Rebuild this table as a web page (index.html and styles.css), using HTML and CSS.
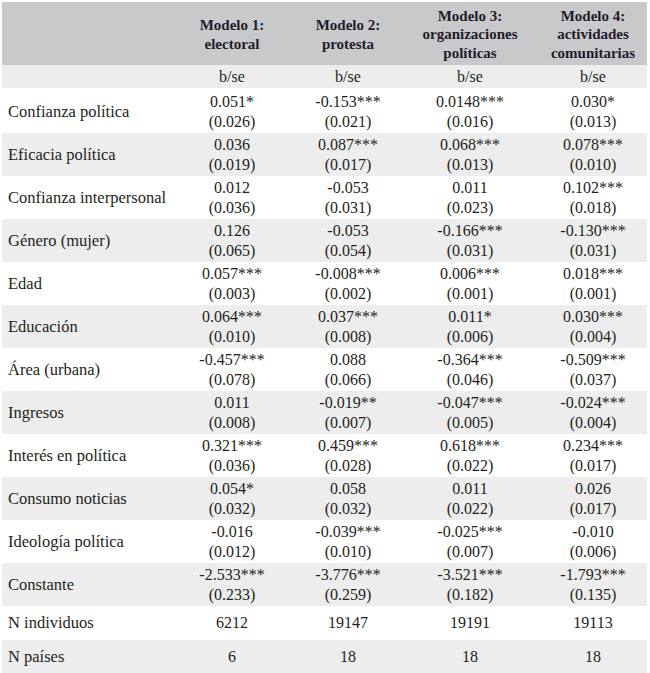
FILE: index.html
```html
<!DOCTYPE html>
<html lang="es">
<head>
<meta charset="utf-8">
<title>Modelos</title>
<link rel="stylesheet" href="styles.css">
</head>
<body>
<table class="results">
  <colgroup>
    <col class="c-label">
    <col class="c-m1">
    <col class="c-m2">
    <col class="c-m3">
    <col class="c-m4">
  </colgroup>
  <thead>
    <tr class="head">
      <th></th>
      <th>Modelo 1:<br>electoral</th>
      <th>Modelo 2:<br>protesta</th>
      <th>Modelo 3:<br>organizaciones<br>políticas</th>
      <th>Modelo 4:<br>actividades<br>comunitarias</th>
    </tr>
    <tr class="sub">
      <td></td><td>b/se</td><td>b/se</td><td>b/se</td><td>b/se</td>
    </tr>
  </thead>
  <tbody>
    <tr class="row first">
      <td class="label">Confianza política</td>
      <td>0.051*<br>(0.026)</td><td>-0.153***<br>(0.021)</td><td>0.0148***<br>(0.016)</td><td>0.030*<br>(0.013)</td>
    </tr>
    <tr class="row alt">
      <td class="label">Eficacia política</td>
      <td>0.036<br>(0.019)</td><td>0.087***<br>(0.017)</td><td>0.068***<br>(0.013)</td><td>0.078***<br>(0.010)</td>
    </tr>
    <tr class="row">
      <td class="label">Confianza interpersonal</td>
      <td>0.012<br>(0.036)</td><td>-0.053<br>(0.031)</td><td>0.011<br>(0.023)</td><td>0.102***<br>(0.018)</td>
    </tr>
    <tr class="row alt">
      <td class="label">Género (mujer)</td>
      <td>0.126<br>(0.065)</td><td>-0.053<br>(0.054)</td><td>-0.166***<br>(0.031)</td><td>-0.130***<br>(0.031)</td>
    </tr>
    <tr class="row">
      <td class="label">Edad</td>
      <td>0.057***<br>(0.003)</td><td>-0.008***<br>(0.002)</td><td>0.006***<br>(0.001)</td><td>0.018***<br>(0.001)</td>
    </tr>
    <tr class="row alt">
      <td class="label">Educación</td>
      <td>0.064***<br>(0.010)</td><td>0.037***<br>(0.008)</td><td>0.011*<br>(0.006)</td><td>0.030***<br>(0.004)</td>
    </tr>
    <tr class="row">
      <td class="label">Área (urbana)</td>
      <td>-0.457***<br>(0.078)</td><td>0.088<br>(0.066)</td><td>-0.364***<br>(0.046)</td><td>-0.509***<br>(0.037)</td>
    </tr>
    <tr class="row alt">
      <td class="label">Ingresos</td>
      <td>0.011<br>(0.008)</td><td>-0.019**<br>(0.007)</td><td>-0.047***<br>(0.005)</td><td>-0.024***<br>(0.004)</td>
    </tr>
    <tr class="row">
      <td class="label">Interés en política</td>
      <td>0.321***<br>(0.036)</td><td>0.459***<br>(0.028)</td><td>0.618***<br>(0.022)</td><td>0.234***<br>(0.017)</td>
    </tr>
    <tr class="row alt">
      <td class="label">Consumo noticias</td>
      <td>0.054*<br>(0.032)</td><td>0.058<br>(0.032)</td><td>0.011<br>(0.022)</td><td>0.026<br>(0.017)</td>
    </tr>
    <tr class="row">
      <td class="label">Ideología política</td>
      <td>-0.016<br>(0.012)</td><td>-0.039***<br>(0.010)</td><td>-0.025***<br>(0.007)</td><td>-0.010<br>(0.006)</td>
    </tr>
    <tr class="row alt">
      <td class="label">Constante</td>
      <td>-2.533***<br>(0.233)</td><td>-3.776***<br>(0.259)</td><td>-3.521***<br>(0.182)</td><td>-1.793***<br>(0.135)</td>
    </tr>
    <tr class="single">
      <td class="label">N individuos</td>
      <td>6212</td><td>19147</td><td>19191</td><td>19113</td>
    </tr>
    <tr class="single alt">
      <td class="label">N países</td>
      <td>6</td><td>18</td><td>18</td><td>18</td>
    </tr>
  </tbody>
</table>
</body>
</html>
```

FILE: styles.css
```css
html, body {
  background: #ffffff;
}
body {
  margin: 2px 0 0 2px;
  font-family: "Liberation Serif", Tinos, "DejaVu Serif", serif;
  color: #231f20;
}
.results {
  border-collapse: collapse;
  border-spacing: 0;
  table-layout: fixed;
  width: 645px;
}
.c-label { width: 167px; }
.c-m1 { width: 126px; }
.c-m2 { width: 106px; }
.c-m3 { width: 138px; }
.c-m4 { width: 108px; }

.results td,
.results th {
  padding: 0;
  text-align: center;
  vertical-align: middle;
}
.head {
  height: 63px;
  background: #c8c9cb;
}
.head th {
  font-size: 15px;
  font-weight: bold;
  line-height: 18.5px;
  padding-top: 2px;
  color: #1e1d2a;
}
.sub {
  height: 23px;
  background: #ededed;
}
.sub td {
  font-size: 16px;
  line-height: 20px;
}
.row {
  height: 43px;
}
.row.first {
  height: 45px;
}
.row td {
  font-size: 16px;
  line-height: 20.5px;
  padding-top: 1px;
}
.row.first td {
  padding-top: 3px;
}
.single {
  height: 34px;
}
.single td {
  font-size: 16px;
  line-height: 20px;
}
.alt {
  background: #ededed;
}
.results td.label {
  text-align: left;
  padding-left: 6px;
  font-size: 16.5px;
}
```
